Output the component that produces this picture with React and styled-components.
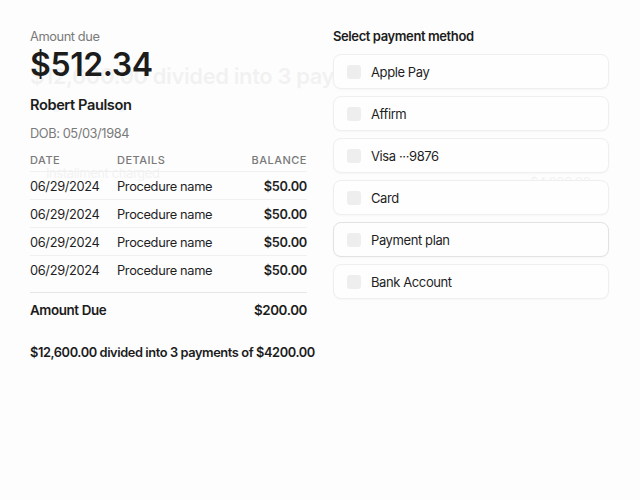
import React from "react";
import styled, { createGlobalStyle } from "styled-components";

const Global = createGlobalStyle`
  html, body { margin: 0; padding: 0; background: #fdfdfd; }
  body {
    font-family: Inter, "Noto Sans", "Liberation Sans", sans-serif;
    color: #1d1d1f;
    letter-spacing: -0.025em;
  }
  * { box-sizing: border-box; }
`;

const Stage = styled.div`
  position: relative;
  width: 640px;
  height: 500px;
  overflow: hidden;
  background: #fdfdfd;
`;

/* previous step fading out behind the current one */
const FadeLayer = styled.div`
  position: absolute;
  inset: 0;
  opacity: 0.045;
  pointer-events: none;
`;

const FadeHeadline = styled.div`
  position: absolute;
  left: 30px;
  top: 63px;
  font-size: 22px;
  font-weight: 600;
  white-space: nowrap;
  color: #111;
`;

const FadeNote = styled.div`
  position: absolute;
  left: ${(p) => p.$x}px;
  top: ${(p) => p.$y}px;
  font-size: 13px;
  color: #111;
  white-space: nowrap;
`;

const FadeDot = styled.span`
  position: absolute;
  left: ${(p) => p.$x}px;
  top: ${(p) => p.$y}px;
  width: 8px;
  height: 8px;
  border-radius: 50%;
  background: #2a6fd6;
`;

const Layout = styled.div`
  position: relative;
  display: grid;
  grid-template-columns: 277px 276px;
  column-gap: 26px;
  padding: 28px 0 0 30px;
`;

const Column = styled.div`
  display: flex;
  flex-direction: column;
`;

const Label = styled.div`
  padding-top: 1px;
  font-size: 12.8px;
  line-height: 16px;
  color: #7a7a7a;
`;

const BigAmount = styled.div`
  font-size: 32px;
  line-height: 39px;
  font-weight: 600;
  letter-spacing: -0.4px;
  color: #1c1c1c;
`;

const Patient = styled.div`
  margin-top: 11px;
  font-size: 14.6px;
  line-height: 20px;
  font-weight: 600;
  color: #1c1c1c;
`;

const Dob = styled.div`
  margin-top: 10px;
  font-size: 12.8px;
  line-height: 18px;
  color: #7a7a7a;
`;

const Table = styled.div`
  margin-top: 6px;
  display: flex;
  flex-direction: column;
`;

const Row = styled.div`
  display: grid;
  grid-template-columns: 87px 1fr auto;
  align-items: center;
  height: ${(p) => (p.$head ? 23 : 28)}px;
  padding-top: ${(p) => (p.$head ? 0 : 2)}px;
  font-size: ${(p) => (p.$head ? "11px" : "12.8px")};
  letter-spacing: ${(p) => (p.$head ? "0.5px" : "-0.025em")};
  color: ${(p) => (p.$head ? "#7a7a7a" : "#1f1f1f")};
  font-weight: ${(p) => (p.$head ? 500 : 400)};
  border-bottom: 1px solid ${(p) => (p.$last ? "transparent" : "#f0f0f0")};
`;

const Money = styled.span`
  font-weight: 600;
  text-align: right;
`;

const TotalRow = styled.div`
  margin-top: 8px;
  border-top: 1px solid #e6e6e6;
  display: flex;
  justify-content: space-between;
  align-items: center;
  height: 34px;
  font-size: 13.4px;
  font-weight: 600;
  color: #1c1c1c;
`;

const Plan = styled.div`
  margin-top: 18px;
  font-size: 12.8px;
  line-height: 18px;
  font-weight: 600;
  white-space: nowrap;
  color: #1c1c1c;
`;

const SectionTitle = styled.div`
  font-size: 13px;
  line-height: 16px;
  font-weight: 600;
  color: #1c1c1c;
  margin-bottom: 10px;
`;

const Methods = styled.div`
  display: flex;
  flex-direction: column;
  gap: 7px;
`;

const Method = styled.label`
  display: flex;
  align-items: center;
  gap: 10px;
  height: 35px;
  padding-left: 13px;
  border: 1px solid ${(p) => (p.$active ? "#e2e2e2" : "#efefef")};
  border-radius: 8px;
  background: #fefefe;
  box-shadow: 0 1px 2px rgba(0, 0, 0, 0.03);
  font-size: 13px;
  color: #1f1f1f;
`;

const Box = styled.span`
  width: 14px;
  height: 14px;
  border-radius: 3px;
  background: #eeeeee;
  flex: none;
`;

const rows = Array.from({ length: 4 }, () => ({
  date: "06/29/2024",
  detail: "Procedure name",
  amount: "$50.00",
}));

const methods = ["Apple Pay", "Affirm", "Visa \u00b7\u00b7\u00b79876", "Card", "Payment plan", "Bank Account"];

export default function App() {
  return (
    <Stage>
      <Global />
      <FadeLayer>
        <FadeHeadline>$12,600.00 divided into 3 payments of $4200.00</FadeHeadline>
        <FadeDot $x={52} $y={104} />
        <FadeDot $x={118} $y={104} />
        <FadeNote $x={46} $y={165}>Installment charged</FadeNote>
        <FadeNote $x={530} $y={174}>$4,200.00</FadeNote>
      </FadeLayer>
      <Layout>
        <Column>
          <Label>Amount due</Label>
          <BigAmount>$512.34</BigAmount>
          <Patient>Robert Paulson</Patient>
          <Dob>DOB: 05/03/1984</Dob>
          <Table>
            <Row $head>
              <span>DATE</span>
              <span>DETAILS</span>
              <span>BALANCE</span>
            </Row>
            {rows.map((r, i) => (
              <Row key={i} $last={i === rows.length - 1}>
                <span>{r.date}</span>
                <span>{r.detail}</span>
                <Money>{r.amount}</Money>
              </Row>
            ))}
          </Table>
          <TotalRow>
            <span>Amount Due</span>
            <span>$200.00</span>
          </TotalRow>
          <Plan>$12,600.00 divided into 3 payments of $4200.00</Plan>
        </Column>
        <Column>
          <SectionTitle>Select payment method</SectionTitle>
          <Methods>
            {methods.map((m) => (
              <Method key={m} $active={m === "Payment plan"}>
                <Box />
                <span>{m}</span>
              </Method>
            ))}
          </Methods>
        </Column>
      </Layout>
    </Stage>
  );
}
